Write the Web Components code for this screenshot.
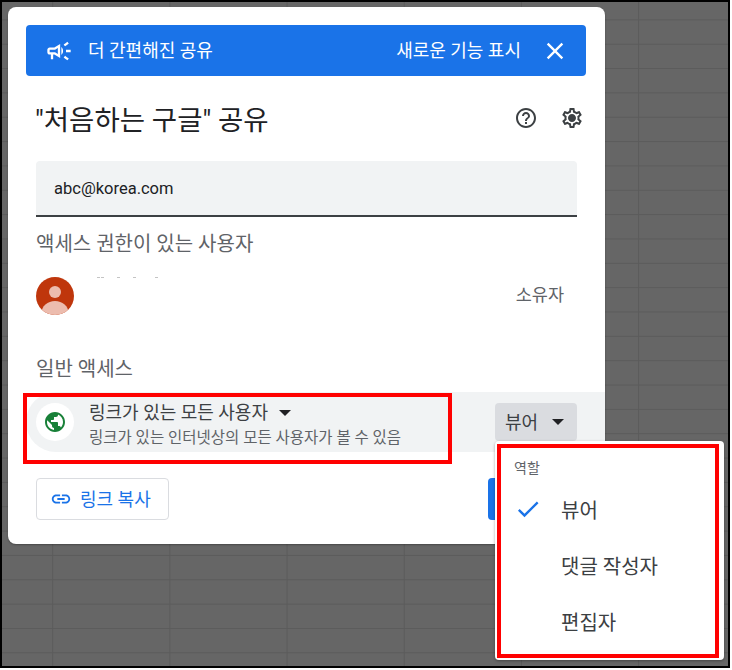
<!DOCTYPE html>
<html lang="ko">
<head>
<meta charset="utf-8">
<title>공유</title>
<style>
  html, body { margin: 0; padding: 0; }
  body { font-family: Roboto, "Noto Sans CJK KR", sans-serif; }
</style>
</head>
<body>
<sheet-backdrop>
  <share-dialog title-text="&quot;처음하는 구글&quot; 공유">
    <promo-banner slot="banner"></promo-banner>
    <email-field slot="field" value="abc@korea.com"></email-field>
    <section-label slot="people-label">액세스 권한이 있는 사용자</section-label>
    <owner-row slot="owner"></owner-row>
    <section-label slot="general-label">일반 액세스</section-label>
    <general-access slot="general"></general-access>
    <copy-link slot="copy"></copy-link>
  </share-dialog>
  <role-menu></role-menu>
  <red-box style="left:23px;top:393px;width:421px;height:63px"></red-box>
  <red-box style="left:497px;top:444px;width:214px;height:206px"></red-box>
</sheet-backdrop>

<script>
const PATHS = {
  promo: 'M18 11v2h4v-2h-4zm-2 6.61c.96.71 2.21 1.65 3.2 2.39.4-.53.8-1.07 1.2-1.6-.99-.74-2.24-1.68-3.2-2.4-.4.54-.8 1.08-1.2 1.61zM20.4 5.6c-.4-.53-.8-1.07-1.2-1.6-.99.74-2.24 1.68-3.2 2.4.4.53.8 1.07 1.2 1.6.96-.72 2.21-1.65 3.2-2.4zM4 9c-1.1 0-2 .9-2 2v2c0 1.1.9 2 2 2h1v4h2v-4h1l5 3V6L8 9H4zm5.03 1.71L11 9.53v4.94l-1.97-1.18-.48-.29H4v-2h4.55l.48-.29zM15.5 12c0-1.33-.58-2.53-1.5-3.35v6.69c.92-.81 1.5-2.01 1.5-3.34z',
  close: 'M19 6.41 17.59 5 12 10.59 6.41 5 5 6.41 10.59 12 5 17.59 6.41 19 12 13.41 17.59 19 19 17.59 13.41 12z',
  help: 'M11 18h2v-2h-2v2zm1-16C6.48 2 2 6.48 2 12s4.48 10 10 10 10-4.48 10-10S17.52 2 12 2zm0 18c-4.41 0-8-3.59-8-8s3.59-8 8-8 8 3.59 8 8-3.59 8-8 8zm0-14c-2.21 0-4 1.79-4 4h2c0-1.1.9-2 2-2s2 .9 2 2c0 2-3 1.75-3 5h2c0-2.25 3-2.5 3-5 0-2.21-1.79-4-4-4z',
  gear: 'M19.43 12.98c.04-.32.07-.64.07-.98s-.03-.66-.07-.98l2.11-1.65c.19-.15.24-.42.12-.64l-2-3.46c-.12-.22-.39-.3-.61-.22l-2.49 1c-.52-.4-1.08-.73-1.69-.98l-.38-2.65C14.46 2.18 14.25 2 14 2h-4c-.25 0-.46.18-.49.42l-.38 2.65c-.61.25-1.17.59-1.69.98l-2.49-1c-.23-.09-.49 0-.61.22l-2 3.46c-.13.22-.07.49.12.64l2.11 1.65c-.04.32-.07.65-.07.98s.03.66.07.98l-2.11 1.65c-.19.15-.24.42-.12.64l2 3.46c.12.22.39.3.61.22l2.49-1c.52.4 1.08.73 1.69.98l.38 2.65c.03.24.24.42.49.42h4c.25 0 .46-.18.49-.42l.38-2.65c.61-.25 1.17-.59 1.69-.98l2.49 1c.23.09.49 0 .61-.22l2-3.46c.12-.22.07-.49-.12-.64l-2.11-1.65zM17.45 11.27c.04.31.05.52.05.73 0 .21-.02.43-.05.73l-.14 1.13.89.7 1.08.84-.7 1.21-1.27-.51-1.04-.42-.9.68c-.43.32-.84.56-1.25.73l-1.06.43-.16 1.13-.2 1.35h-1.4l-.19-1.35-.16-1.13-1.06-.43c-.43-.18-.83-.41-1.23-.71l-.91-.7-1.06.43-1.27.51-.7-1.21 1.08-.84.89-.7-.14-1.13c-.03-.31-.05-.54-.05-.74s.02-.43.05-.73l.14-1.13-.89-.7-1.08-.84.7-1.21 1.27.51 1.04.42.9-.68c.43-.32.84-.56 1.25-.73l1.06-.43.16-1.13.2-1.35h1.39l.19 1.35.16 1.13 1.06.43c.43.18.83.41 1.23.71l.91.7 1.06-.43 1.27-.51.7 1.21-1.07.85-.89.7.14 1.13zM12 8c-2.21 0-4 1.79-4 4s1.79 4 4 4 4-1.79 4-4-1.79-4-4-4z',
  globe: 'M12 2C6.48 2 2 6.48 2 12s4.48 10 10 10 10-4.48 10-10S17.52 2 12 2zm-1 17.93c-3.95-.49-7-3.85-7-7.93 0-.62.08-1.21.21-1.79L9 15v1c0 1.1.9 2 2 2v1.93zm6.9-2.54c-.26-.81-1-1.39-1.9-1.39h-1v-3c0-.55-.45-1-1-1H8v-2h2c.55 0 1-.45 1-1V7h2c1.1 0 2-.9 2-2v-.41c2.93 1.19 5 4.06 5 7.41 0 2.08-.8 3.97-2.1 5.39z',
  link: 'M3.9 12c0-1.71 1.39-3.1 3.1-3.1h4V7H7c-2.76 0-5 2.24-5 5s2.24 5 5 5h4v-1.9H7c-1.71 0-3.1-1.39-3.1-3.1zM8 13h8v-2H8v2zm9-6h-4v1.9h4c1.71 0 3.1 1.39 3.1 3.1s-1.39 3.1-3.1 3.1h-4V17h4c2.76 0 5-2.24 5-5s-2.24-5-5-5z',
  check: 'M9 16.17 4.83 12l-1.42 1.41L9 19 21 7l-1.41-1.41z'
};

// small helper, every icon is the same 24 box svg
function icon(name, size, color) {
  return `<svg width="${size}" height="${size}" viewBox="0 0 24 24" fill="${color}" style="display:block;flex:none"><path d="${PATHS[name]}"/></svg>`;
}

function define(tag, css, html) {
  customElements.define(tag, class extends HTMLElement {
    constructor() {
      super();
      this.attachShadow({ mode: 'open' });
      const content = typeof html === 'function' ? html(this) : html;
      this.shadowRoot.innerHTML = `<style>${css}</style>${content}`;
    }
  });
}

const gridV = 'linear-gradient(to right, transparent 116px, #5b5b5b 116px, #5b5b5b 117.2px, transparent 117.2px)';
const gridH = 'linear-gradient(to bottom, transparent 23.2px, #5b5b5b 23.2px, #5b5b5b 24.35px)';

define('sheet-backdrop', `
  :host {
    display: block;
    position: relative;
    box-sizing: border-box;
    width: 732px;
    height: 670px;
    overflow: hidden;
    background: #fff;
    font-family: Roboto, "Noto Sans CJK KR", sans-serif;
  }
  .frame {
    box-sizing: border-box;
    width: 730px;
    height: 668px;
    padding: 5px 0 0 6px;
    border: 2px solid #000;
    background-color: #666;
    background-image: ${gridV}, ${gridH};
    background-size: 117.2px 100%, 100% 24.35px;
    background-position: -66px 0, 0 -6px;
  }
`, `<div class="frame"><slot></slot></div>`);

define('share-dialog', `
  :host {
    display: block;
    box-sizing: border-box;
    width: 597px;
    height: 537px;
    background: #fff;
    border-radius: 8px;
    padding: 18px 19px 0 18px;
    color: #202124;
    box-shadow: 0 1px 2px rgba(0,0,0,.3);
  }
  .head {
    display: flex;
    align-items: center;
    padding: 0 2px 0 9px;
    height: 38px;
    margin-top: 25px;
  }
  h1 {
    flex: 1;
    margin: 2px 0 0;
    font-size: 27.5px;
    font-weight: 400;
    line-height: 32px;
    color: #202124;
  }
  .tools { display: flex; gap: 22px; align-items: center; margin-bottom: 4px; }
  .body { padding: 0 9px 0 10px; }
  .field { display: block; margin-top: 22px; }
  .l1 { display: block; margin-top: 15px; }
  .owner { display: block; margin-top: 21px; }
  .l2 { display: block; margin-top: 42px; }
  .general { display: block; margin: 11px -19px 0 0; }
  .foot { display: flex; justify-content: space-between; margin: 26px 9px 0 10px; }
  .done { width: 89px; height: 42px; background: #1a73e8; border-radius: 4px; }
`, el => `
  <slot name="banner"></slot>
  <div class="head">
    <h1>${el.getAttribute('title-text')}</h1>
    <div class="tools">${icon('help', 24, '#3c4043')}${icon('gear', 24, '#3c4043')}</div>
  </div>
  <div class="body">
    <div class="field"><slot name="field"></slot></div>
    <div class="l1"><slot name="people-label"></slot></div>
    <div class="owner"><slot name="owner"></slot></div>
    <div class="l2"><slot name="general-label"></slot></div>
  </div>
  <div class="general"><slot name="general"></slot></div>
  <div class="foot"><slot name="copy"></slot><div class="done"></div></div>
`);

define('promo-banner', `
  :host {
    display: flex;
    align-items: center;
    box-sizing: border-box;
    height: 51px;
    background: #1a73e8;
    border-radius: 4px;
    color: #fff;
    font-size: 18px;
    padding: 0 17px 0 19px;
  }
  .t { margin: 0 0 3px 15px; flex: 1; }
  .more { margin: 0 20px 3px 0; }
`, `${icon('promo', 28, '#fff')}<span class="t">더 간편해진 공유</span><span class="more">새로운 기능 표시</span>${icon('close', 28, '#fff')}`);

define('email-field', `
  :host {
    display: flex;
    align-items: center;
    box-sizing: border-box;
    height: 56px;
    padding: 0 18px;
    background: #f1f3f4;
    border-radius: 4px 4px 0 0;
    border-bottom: 2px solid #3c4043;
    font-size: 16.5px;
    color: #202124;
  }
`, el => el.getAttribute('value'));

define('section-label', `
  :host { display: block; font-size: 20px; line-height: 24px; color: #5f6368; }
`, `<slot></slot>`);

define('owner-row', `
  :host { display: flex; align-items: center; height: 38px; }
  .av { flex: none; }
  .name { flex: 1; align-self: flex-start; display: flex; padding: 0 0 0 23px; }
  .name i { width: 3px; height: 1px; background: #c4c4c4; margin-right: 13px; }
  .name i:first-child { margin-right: 1px; }
  .name i:nth-child(4) { margin-right: 19px; }
  .role { color: #5f6368; font-size: 17.5px; margin: 0 13px 6px 0; }
`, `
  <svg class="av" width="38" height="38" viewBox="0 0 38 38">
    <defs><clipPath id="c"><circle cx="19" cy="19" r="19"/></clipPath></defs>
    <circle cx="19" cy="19" r="19" fill="#bf360c"/>
    <g clip-path="url(#c)" fill="#ecbcae">
      <circle cx="19" cy="15" r="6"/>
      <ellipse cx="19" cy="36" rx="13.5" ry="12"/>
    </g>
  </svg>
  <span class="name"><i></i><i></i><i></i><i></i><i></i></span>
  <span class="role">소유자</span>
`);

define('general-access', `
  :host {
    display: flex;
    align-items: center;
    box-sizing: border-box;
    height: 60px;
    background: #f1f3f4;
    border-radius: 30px 0 0 30px;
    padding: 0 28px 0 10px;
  }
  .who { flex: 1; display: flex; gap: 15px; align-items: center; }
  .globe {
    width: 38px; height: 38px; border-radius: 50%; background: #fff;
    display: flex; align-items: center; justify-content: center; flex: none;
  }
  .copy { margin-top: 5px; }
  .t1 { font-size: 18px; line-height: 24px; color: #3c4043; display: flex; align-items: center; gap: 11px; }
  .t2 { font-size: 15.5px; line-height: 20px; color: #5f6368; margin-top: 3px; }
  .caret { width: 0; height: 0; border: 6px solid transparent; border-top: 6px solid #202124; border-bottom: 0; }
  .btn {
    display: flex; align-items: center; justify-content: space-between;
    box-sizing: border-box; width: 82px; height: 38px; padding: 0 13px 0 10px;
    background: #dadce0; border-radius: 4px; font-size: 18px; color: #3c4043;
  }
  .btn span.lbl { margin-bottom: 2px; }
`, `
  <div class="who">
    <div class="globe">${icon('globe', 24, '#188038')}</div>
    <div class="copy">
      <div class="t1">링크가 있는 모든 사용자 <span class="caret"></span></div>
      <div class="t2">링크가 있는 인터넷상의 모든 사용자가 볼 수 있음</div>
    </div>
  </div>
  <div class="btn"><span class="lbl">뷰어</span> <span class="caret"></span></div>
`);

define('copy-link', `
  :host {
    display: inline-flex; align-items: center; gap: 8px;
    box-sizing: border-box; width: 133px; height: 42px; padding: 0 13px;
    background: #fff; border: 1px solid #dadce0; border-radius: 4px;
    color: #1a73e8; font-size: 18px;
  }
  span { margin-bottom: 3px; }
`, `${icon('link', 22, '#1a73e8')}<span>링크 복사</span>`);

define('role-menu', `
  :host {
    position: absolute;
    left: 495px;
    top: 441px;
    box-sizing: border-box;
    width: 229px;
    height: 219px;
    background: #fff;
    border-radius: 4px;
    box-shadow: 0 1px 3px rgba(0,0,0,.35);
    padding: 19px 0 0 19px;
    color: #3c4043;
  }
  .cap { font-size: 14px; line-height: 16px; color: #5f6368; }
  .item { display: flex; align-items: center; height: 56px; font-size: 20px; color: #3c4043; }
  .cap + .item { margin-top: 5px; }
  .slot { width: 47px; flex: none; }
`, `
  <div class="cap">역할</div>
  <div class="item"><span class="slot">${icon('check', 28, '#1a73e8')}</span>뷰어</div>
  <div class="item"><span class="slot"></span>댓글 작성자</div>
  <div class="item"><span class="slot"></span>편집자</div>
`);

define('red-box', `
  :host {
    position: absolute;
    box-sizing: content-box;
    border: 4px solid #f00;
    pointer-events: none;
  }
`, ``);
</script>
</body>
</html>
